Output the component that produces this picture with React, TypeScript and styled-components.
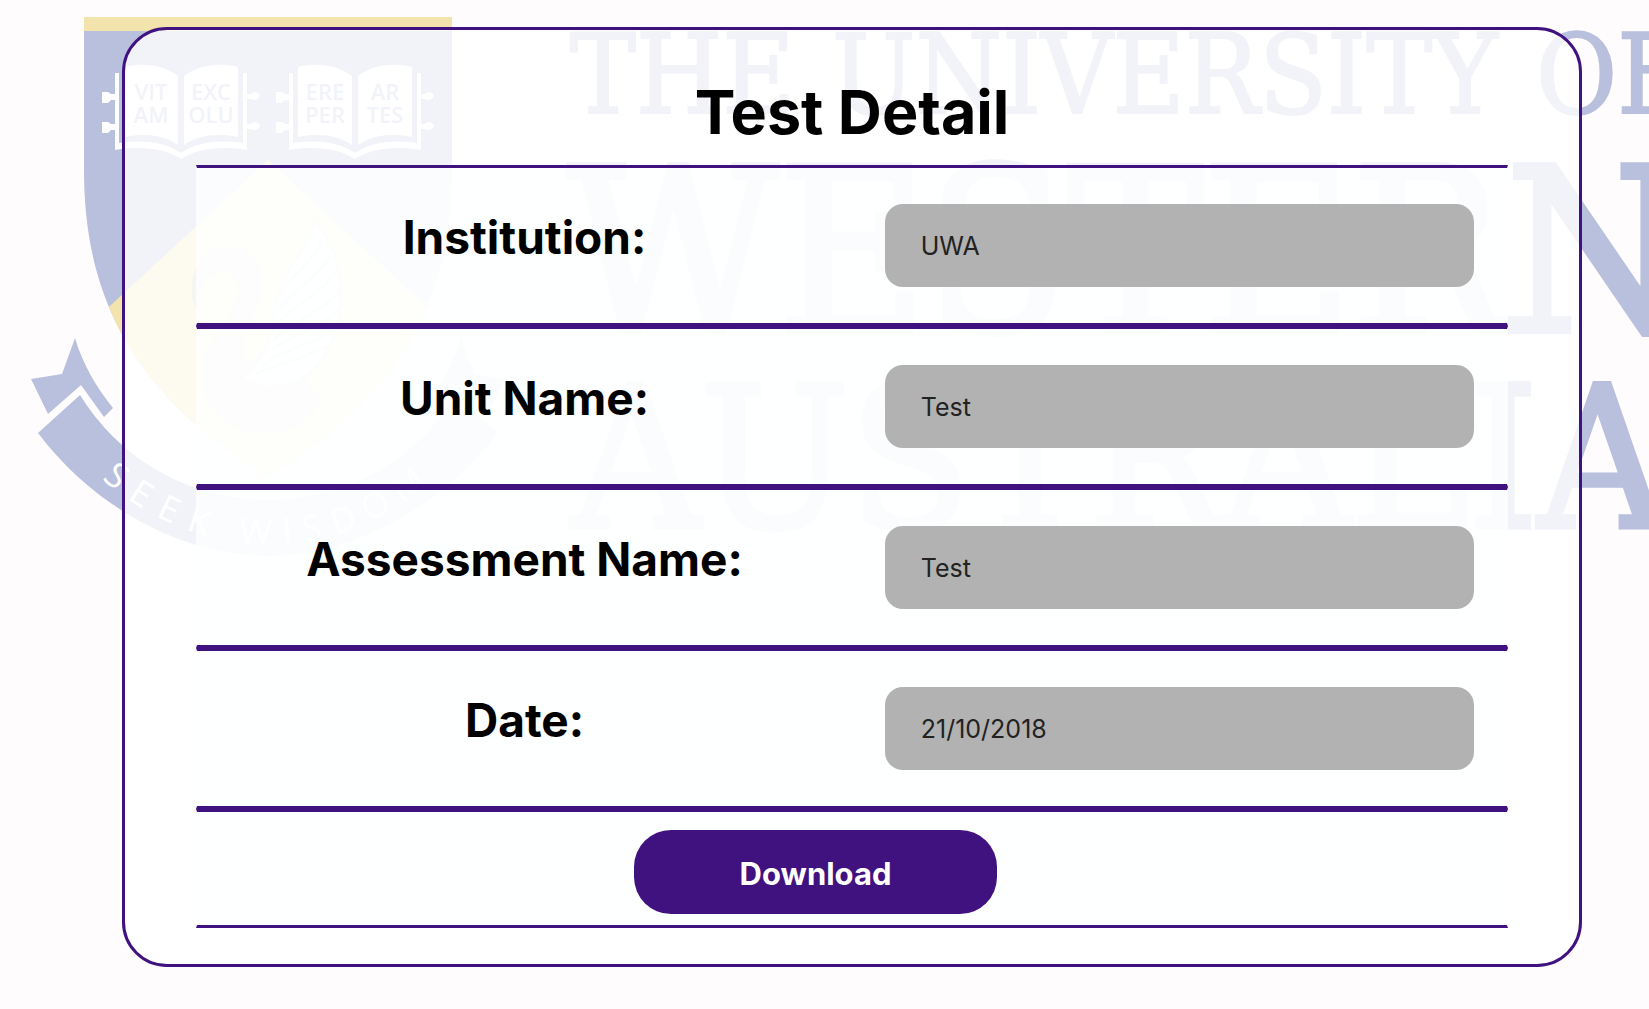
import React from 'react';
import styled, { createGlobalStyle } from 'styled-components';

const purple = '#40127f';
const crestBlue = '#b8c0dd';
const crestGold = '#f3e4ae';
const swanGrey = '#cfcdbd';

const GlobalStyle = createGlobalStyle`
  *, *::before, *::after { box-sizing: border-box; }
  body {
    margin: 0;
    background: #fffcfd;
    color: #000;
    font-family: Inter, "Liberation Sans", sans-serif;
  }
`;

const Page = styled.main`
  position: relative;
  overflow: hidden;
  min-height: 100vh;
  padding: 27px 67px 42px 122px;
`;

const Backdrop = styled.svg`
  position: absolute;
  top: 0;
  left: 0;
  z-index: 0;
`;

const Card = styled.form`
  position: relative;
  z-index: 1;
  padding: 42px 71px 36px;
  border: 3px solid ${purple};
  border-radius: 45px;
  background: rgba(255, 255, 255, 0.8);
`;

const Title = styled.h1`
  margin: 0 0 13px;
  font-size: 61px;
  font-weight: 700;
  line-height: 80px;
  text-align: center;
`;

const Row = styled.div`
  display: grid;
  grid-template-columns: 1fr 1fr;
  align-items: center;
  border: solid;
  border-width: 3px 1px;
  border-color: ${purple} transparent;
  padding: 36px 0;
  background: rgba(254, 255, 255, 0.75);
`;

const Label = styled.label`
  padding-bottom: 18px;
  font-size: 46px;
  font-weight: 700;
  line-height: 56px;
  text-align: center;
`;

const Field = styled.input`
  width: 90%;
  height: 83px;
  margin: 0 auto;
  padding: 0 36px;
  border: 0;
  border-radius: 18px;
  background: #b2b2b2;
  color: #222;
  font: 400 25px Inter, "Liberation Sans", sans-serif;
`;

const Actions = styled.div`
  display: flex;
  justify-content: center;
  padding: 18px 73px 11px 0;
  border: solid;
  border-width: 3px 1px;
  border-color: ${purple} transparent;
  background: rgba(254, 255, 255, 0.75);
`;

const DownloadButton = styled.button`
  width: 363px;
  height: 84px;
  padding: 2px 0 0;
  border: 0;
  border-radius: 37px;
  background: ${purple};
  color: #fff;
  font: 700 31px Inter, "Liberation Sans", sans-serif;
  cursor: pointer;
`;

const Wordmark = styled.text<{ $size: number; $weight: number }>`
  font-family: "DejaVu Serif Condensed", "DejaVu Serif", serif;
  font-size: ${(p) => p.$size}px;
  fill: ${crestBlue};
  stroke: ${crestBlue};
  stroke-width: ${(p) => p.$weight}px;
`;

const PageText = styled.text`
  font-family: "Open Sans", sans-serif;
  font-size: 22px;
  font-weight: 600;
  fill: ${crestBlue};
  text-anchor: middle;
`;

const MottoLetter = styled.text`
  font-family: "Open Sans", sans-serif;
  font-size: 35px;
  fill: #fff;
  text-anchor: middle;
`;

type BookProps = { x: number; left: [string, string]; right: [string, string] };

function Book({ x, left, right }: BookProps) {
  return (
    <g transform={`translate(${x} 0)`}>
      <path
        d="M-66 73h4v70c22-3 44-2 62 10c18-12 40-13 62-10V73h4v77c-26-4-48-2-66 9c-18-11-40-13-66-9Z"
        fill="#fff"
      />
      <path
        d="M-57 67c20-5 40-2 54 9v69c-14-10-34-12-54-8ZM57 67c-20-5-40-2-54 9v69c14-10 34-12 54-8Z"
        fill="#fff"
      />
      {[97, 127].map((y) => (
        <path
          key={y}
          d={`M-66 ${y - 3}h-4l-3-2h-6v11h6l3-3h4ZM66 ${y - 3}h4l3-2q5 0 6 4q-2 4-6 4l-3-1h-4Z`}
          fill="#fff"
        />
      ))}
      <PageText x={-30} y={100}>{left[0]}</PageText>
      <PageText x={-30} y={123}>{left[1]}</PageText>
      <PageText x={30} y={100}>{right[0]}</PageText>
      <PageText x={30} y={123}>{right[1]}</PageText>
    </g>
  );
}

const motto = [
  ['S', 109], ['E', 135], ['E', 164], ['K', 196], ['W', 255],
  ['I', 288], ['S', 314], ['D', 347], ['O', 381], ['M', 415],
] as const;

function Swan() {
  return (
    <g fill={swanGrey}>
      <path d="M192 290c0-27 14-43 36-43c21 0 34 14 34 35c0 30-20 40-18 70c1 20 14 10 24-12l56 60c-14 22-36 33-60 33c-38 0-62-26-62-60c0-40 34-52 36-84c0-12-9-19-20-17c-9 2-12 10-16 15l-5 20c-4-2-6-8-5-17Z" />
      <path
        d="M314 220c-4 30-38 54-40 96c0 22-12 48-34 64c20 2 10 8 38 6c28-2 46-24 56-50c12-38 8-86-20-116Z"
        fill="#fff"
        stroke={swanGrey}
        strokeWidth="3"
      />
      <path
        d="M322 240c-10 24-34 38-42 56M330 256c-12 22-42 38-52 56M336 272c-14 22-48 36-60 54M340 290c-16 22-52 32-66 50M340 308c-18 20-56 30-72 44M338 326c-20 18-60 24-76 40M330 344c-20 14-56 20-74 30"
        fill="none"
        stroke={swanGrey}
        strokeWidth="3"
      />
    </g>
  );
}

function UniversityLogo() {
  return (
    <Backdrop width="1900" height="600" viewBox="0 0 1900 600" aria-hidden="true">
      <defs>
        <clipPath id="shield">
          <path d="M84 17H452V170C452 300 401 395 268 477C135 395 84 300 84 170Z" />
        </clipPath>
      </defs>
      <g clipPath="url(#shield)">
        <rect x="84" y="17" width="368" height="460" fill={crestBlue} />
        <rect x="84" y="17" width="368" height="14" fill={crestGold} />
        <path d="M268 160L452 330V480H84V330Z" fill={crestGold} />
      </g>
      <Swan />
      <Book x={181} left={['VIT', 'AM']} right={['EXC', 'OLU']} />
      <Book x={355} left={['ERE', 'PER']} right={['AR', 'TES']} />
      <g fill={crestBlue}>
        <path d="M75 338C83 365 97 388 113 408L104 417L81 385L48 414L31 379L62 374Z" />
        <path d="M461 338C453 365 439 388 423 408L432 417L455 385L488 414L505 379L474 374Z" />
        <path d="M80 395C120 460 190 500 268 500C346 500 416 460 456 395L498 433C440 510 350 556 268 556C186 556 96 510 38 433Z" />
      </g>
      {motto.map(([letter, x]) => {
        const angle = Math.asin((x - 268) / 250);
        const y = 284 + 260 * Math.cos(angle);
        return (
          <MottoLetter
            key={x}
            transform={`translate(${x} ${Math.round(y)}) rotate(${Math.round((-angle * 180) / Math.PI)})`}
          >
            {letter}
          </MottoLetter>
        );
      })}
      <Wordmark $size={110} $weight={2} x={570} y={113}>THE</Wordmark>
      <Wordmark $size={110} $weight={2} x={832} y={113}>UNIVERSITY</Wordmark>
      <Wordmark $size={110} $weight={2} x={1536} y={113}>OF</Wordmark>
      <Wordmark $size={227} $weight={6} x={568} y={331}>WESTERN</Wordmark>
      <Wordmark $size={197} $weight={5} x={572} y={527}>AUSTRALIA</Wordmark>
    </Backdrop>
  );
}

const fields = [
  { id: 'institution', label: 'Institution:', value: 'UWA' },
  { id: 'unit', label: 'Unit Name:', value: 'Test' },
  { id: 'assessment', label: 'Assessment Name:', value: 'Test' },
  { id: 'date', label: 'Date:', value: '21/10/2018' },
];

export default function App() {
  return (
    <>
      <GlobalStyle />
      <Page>
        <UniversityLogo />
        <Card onSubmit={(e) => e.preventDefault()}>
          <Title>Test Detail</Title>
          {fields.map((f) => (
            <Row key={f.id}>
              <Label htmlFor={f.id}>{f.label}</Label>
              <Field id={f.id} type="text" defaultValue={f.value} readOnly />
            </Row>
          ))}
          <Actions>
            <DownloadButton type="submit">Download</DownloadButton>
          </Actions>
        </Card>
      </Page>
    </>
  );
}
